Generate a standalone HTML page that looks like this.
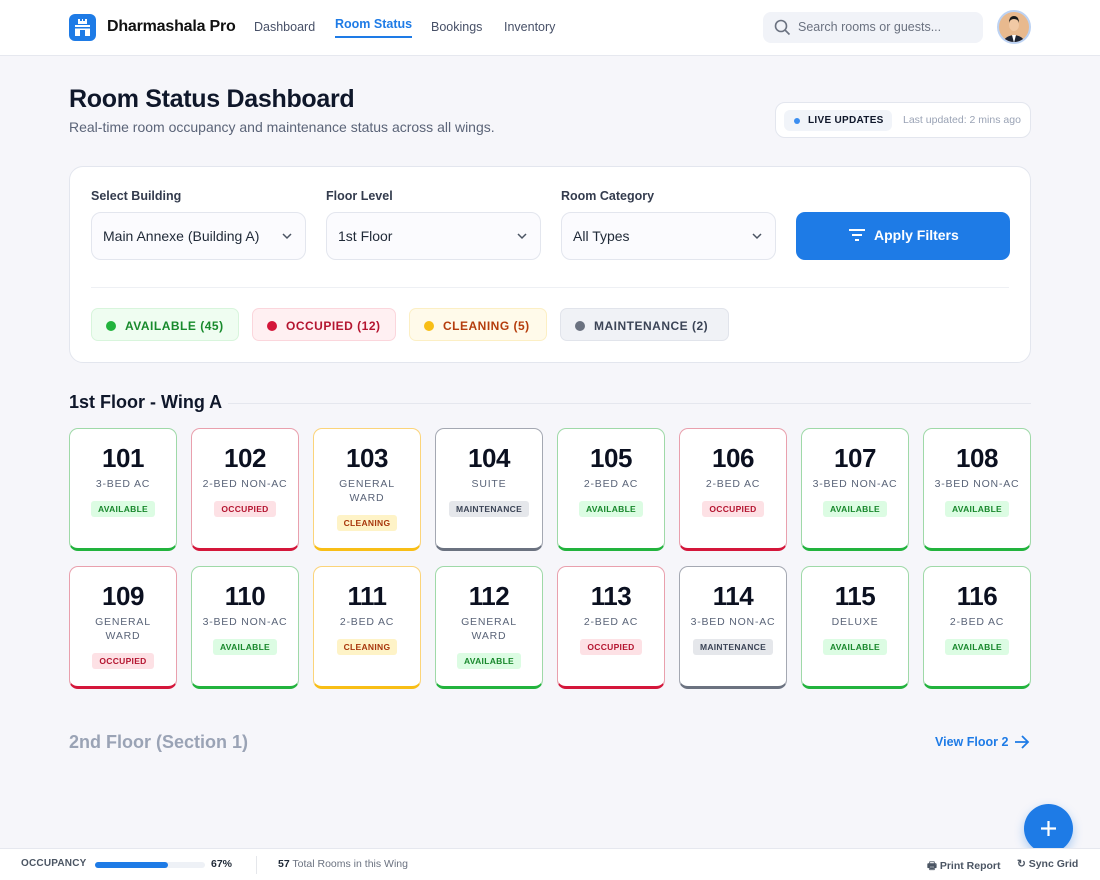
<!DOCTYPE html>
<html><head><meta charset="utf-8"><style>
*{box-sizing:border-box;margin:0;padding:0}
body{width:1100px;height:880px;background:#f6f6fa;font-family:"Liberation Sans",sans-serif;color:#0f172a;position:relative;overflow:hidden}
.hdr{position:absolute;top:0;left:0;width:1100px;height:56px;background:#fff;border-bottom:1px solid #e6e8ef}
.logo{position:absolute;left:69px;top:14px;width:27px;height:27px;background:#1e7be6;border-radius:6px}
.brand{position:absolute;left:107px;top:18px;font-size:16px;font-weight:bold;color:#111;letter-spacing:-0.2px}
.nav{position:absolute;top:20px;font-size:12.5px;color:#475067;white-space:nowrap}
.search{position:absolute;left:763px;top:12px;width:220px;height:31px;background:#f1f3f8;border-radius:8px;font-size:12.5px;color:#6b7280;padding:8px 0 0 35px}
.av{position:absolute;left:997px;top:10px;width:34px;height:34px;border-radius:50%;background:#e8b98e;border:2px solid #bcd2f3;overflow:hidden}
h1{position:absolute;left:69px;top:85px;font-size:25px;font-weight:bold;letter-spacing:-0.3px}
.sub{position:absolute;left:69px;top:119px;font-size:14px;color:#5b6478}
.live{position:absolute;left:775px;top:102px;width:256px;height:36px;background:#fff;border:1px solid #e3e6ee;border-radius:10px;white-space:nowrap}
.live .pill{position:absolute;left:8px;top:7px;width:108px;height:21px;background:#f1f4f9;border-radius:6px;font-size:10px;font-weight:bold;padding:5px 0 0 24px;letter-spacing:.3px}
.live .pill:before{content:"";position:absolute;left:10px;top:8px;width:6px;height:6px;border-radius:50%;background:#3b8ef0}
.live .t{position:absolute;left:127px;top:11px;font-size:10.5px;color:#9aa3b5}
.panel{position:absolute;left:69px;top:166px;width:962px;height:197px;background:#fff;border:1px solid #e3e6ee;border-radius:14px}
.lbl{position:absolute;top:22px;font-size:12.5px;font-weight:bold;color:#333b4d}
.sel{position:absolute;top:45px;width:215px;height:48px;border:1px solid #e3e6ee;background:#fbfbfe;border-radius:10px;font-size:14px;padding:15px 0 0 11px;color:#1f2937}
.sel svg{position:absolute;right:12px;top:19px}
.btn{position:absolute;left:726px;top:45px;width:214px;height:48px;background:#1e7be6;border-radius:9px;color:#fff;font-weight:bold;font-size:14px;padding:15px 0 0 78px}
.btn svg{position:absolute;left:52px;top:16px}
.hr{position:absolute;left:21px;right:21px;top:120px;height:1px;background:#eef0f4}
.chip{position:absolute;top:141px;height:33px;border-radius:7px;font-size:12px;font-weight:bold;letter-spacing:.5px;padding:10px 0 0 33px;white-space:nowrap}
.chip:before{content:"";position:absolute;left:14px;top:12px;width:10px;height:10px;border-radius:50%;background:currentColor}
.chip.a{background:#effdf1;border:1px solid #d8f5dc;color:#178a2c}.chip.a:before{background:#22b33d}
.chip.o{background:#fff0f2;border:1px solid #fbd6dc;color:#b41530}.chip.o:before{background:#d4163a}
.chip.c{background:#fffaea;border:1px solid #fcefc4;color:#b53d0d}.chip.c:before{background:#f8be16}
.chip.m{background:#f0f2f6;border:1px solid #e1e4eb;color:#3b4456}.chip.m:before{background:#6b7280}
.sec{position:absolute;left:69px;top:392px;font-size:18px;font-weight:bold}
.secl{position:absolute;left:228px;right:69px;top:403px;height:1px;background:#e5e7ee}
.card{position:absolute;width:108px;height:123px;background:#fff;border:1px solid;border-bottom-width:3px;border-radius:9px;text-align:center}
.card .n{font-size:26px;font-weight:bold;margin-top:14px;color:#0b1020;letter-spacing:-0.5px}
.card .ty{font-size:10.5px;color:#5a6478;letter-spacing:.8px;margin:3px auto 0;line-height:14px;width:90px}
.card .b{display:inline-block;font-size:8.5px;font-weight:bold;padding:3px 7px;border-radius:3px;margin-top:10px;letter-spacing:.3px}
.g{border-color:#9fd9a8 #9fd9a8 #22b33d}.g .b{background:#dcfce3;color:#17872b}
.r{border-color:#e9a0ad #e9a0ad #d4163a}.r .b{background:#fde1e5;color:#b41530}
.y{border-color:#fbd47a #fbd47a #f8be16}.y .b{background:#fef3c7;color:#a8360c}
.k{border-color:#a4a8b2 #a4a8b2 #6b7280}.k .b{background:#e5e7eb;color:#3b4456}
.f2{position:absolute;left:69px;top:732px;font-size:18px;font-weight:bold;color:#9aa3b5}
.vf{position:absolute;left:935px;top:735px;font-size:12.5px;font-weight:bold;color:#1e7be6;white-space:nowrap}
.fab{position:absolute;left:1024px;top:804px;width:49px;height:49px;border-radius:50%;background:#1e7be6;box-shadow:0 4px 10px rgba(30,123,230,.35)}
.foot{position:absolute;left:0;top:848px;width:1100px;height:32px;background:#fff;border-top:1px solid #e6e8ef;font-size:10.5px;color:#6b7280}
.foot span{position:absolute;top:9px;white-space:nowrap}
</style></head><body>
<div class="hdr">
 <div class="logo"><svg width="27" height="27" viewBox="0 0 27 27"><rect x="9" y="5" width="9" height="5" fill="#fff"/><rect x="11" y="4" width="2" height="3" fill="#1e7be6"/><rect x="14" y="4" width="2" height="3" fill="#1e7be6"/><rect x="6" y="11" width="15" height="11" fill="#fff"/><rect x="11" y="16" width="5" height="6" fill="#1e7be6"/><rect x="6" y="13" width="15" height="1.5" fill="#1e7be6"/></svg></div>
 <div class="brand">Dharmashala Pro</div>
 <div class="nav" style="left:254px">Dashboard</div>
 <div class="nav" style="left:335px;top:17px;color:#1e7be6;font-weight:bold;border-bottom:2px solid #1e7be6;padding-bottom:5px">Room Status</div>
 <div class="nav" style="left:431px">Bookings</div>
 <div class="nav" style="left:504px">Inventory</div>
 <div class="search"><svg style="position:absolute;left:11px;top:7px" width="17" height="17" viewBox="0 0 17 17"><circle cx="7" cy="7" r="5.5" fill="none" stroke="#6b7280" stroke-width="1.6"/><path d="M11 11l4.5 4.5" stroke="#6b7280" stroke-width="1.6"/></svg>Search rooms or guests...</div>
 <div class="av"><svg width="34" height="34" viewBox="0 0 34 34"><ellipse cx="15" cy="13" rx="5" ry="6" fill="#f1c9a5"/><path d="M10 11q0-7 5-7t5 7q-1-4-5-4t-5 4z" fill="#1a1a1a"/><path d="M3 34q1-10 12-11 11 1 12 11z" fill="#1d2433"/><path d="M13 23l2 8 2-8z" fill="#fff"/></svg></div>
</div>
<h1>Room Status Dashboard</h1>
<div class="sub">Real-time room occupancy and maintenance status across all wings.</div>
<div class="live"><div class="pill">LIVE UPDATES</div><div class="t">Last updated: 2 mins ago</div></div>
<div class="panel">
 <div class="lbl" style="left:21px">Select Building</div>
 <div class="lbl" style="left:256px">Floor Level</div>
 <div class="lbl" style="left:491px">Room Category</div>
 <div class="sel" style="left:21px">Main Annexe (Building A)<svg width="12" height="8" viewBox="0 0 12 8"><path d="M2 2l4 4 4-4" fill="none" stroke="#4b5563" stroke-width="1.5"/></svg></div>
 <div class="sel" style="left:256px">1st Floor<svg width="12" height="8" viewBox="0 0 12 8"><path d="M2 2l4 4 4-4" fill="none" stroke="#4b5563" stroke-width="1.5"/></svg></div>
 <div class="sel" style="left:491px">All Types<svg width="12" height="8" viewBox="0 0 12 8"><path d="M2 2l4 4 4-4" fill="none" stroke="#4b5563" stroke-width="1.5"/></svg></div>
 <div class="btn"><svg width="18" height="14" viewBox="0 0 18 14"><path d="M1 2h16M4 7h10M7 12h4" stroke="#fff" stroke-width="2"/></svg>Apply Filters</div>
 <div class="hr"></div>
 <div class="chip a" style="left:21px;width:148px">AVAILABLE (45)</div>
 <div class="chip o" style="left:182px;width:144px">OCCUPIED (12)</div>
 <div class="chip c" style="left:339px;width:138px">CLEANING (5)</div>
 <div class="chip m" style="left:490px;width:169px">MAINTENANCE (2)</div>
</div>
<div class="sec">1st Floor - Wing A</div><div class="secl"></div>

<div class="card g" style="left:69px;top:428px"><div class="n">101</div><div class="ty">3-BED AC</div><div class="b">AVAILABLE</div></div>
<div class="card r" style="left:191px;top:428px"><div class="n">102</div><div class="ty">2-BED NON-AC</div><div class="b">OCCUPIED</div></div>
<div class="card y" style="left:313px;top:428px"><div class="n">103</div><div class="ty">GENERAL WARD</div><div class="b">CLEANING</div></div>
<div class="card k" style="left:435px;top:428px"><div class="n">104</div><div class="ty">SUITE</div><div class="b">MAINTENANCE</div></div>
<div class="card g" style="left:557px;top:428px"><div class="n">105</div><div class="ty">2-BED AC</div><div class="b">AVAILABLE</div></div>
<div class="card r" style="left:679px;top:428px"><div class="n">106</div><div class="ty">2-BED AC</div><div class="b">OCCUPIED</div></div>
<div class="card g" style="left:801px;top:428px"><div class="n">107</div><div class="ty">3-BED NON-AC</div><div class="b">AVAILABLE</div></div>
<div class="card g" style="left:923px;top:428px"><div class="n">108</div><div class="ty">3-BED NON-AC</div><div class="b">AVAILABLE</div></div>

<div class="card r" style="left:69px;top:566px"><div class="n">109</div><div class="ty">GENERAL WARD</div><div class="b">OCCUPIED</div></div>
<div class="card g" style="left:191px;top:566px"><div class="n">110</div><div class="ty">3-BED NON-AC</div><div class="b">AVAILABLE</div></div>
<div class="card y" style="left:313px;top:566px"><div class="n">111</div><div class="ty">2-BED AC</div><div class="b">CLEANING</div></div>
<div class="card g" style="left:435px;top:566px"><div class="n">112</div><div class="ty">GENERAL WARD</div><div class="b">AVAILABLE</div></div>
<div class="card r" style="left:557px;top:566px"><div class="n">113</div><div class="ty">2-BED AC</div><div class="b">OCCUPIED</div></div>
<div class="card k" style="left:679px;top:566px"><div class="n">114</div><div class="ty">3-BED NON-AC</div><div class="b">MAINTENANCE</div></div>
<div class="card g" style="left:801px;top:566px"><div class="n">115</div><div class="ty">DELUXE</div><div class="b">AVAILABLE</div></div>
<div class="card g" style="left:923px;top:566px"><div class="n">116</div><div class="ty">2-BED AC</div><div class="b">AVAILABLE</div></div>

<div class="f2">2nd Floor (Section 1)</div>
<div class="vf">View Floor 2 <svg style="vertical-align:-3px;margin-left:2px" width="16" height="14" viewBox="0 0 16 14"><path d="M1 7h13M8 1l6 6-6 6" fill="none" stroke="#1e7be6" stroke-width="1.8"/></svg></div>
<div class="fab"><svg width="49" height="49" viewBox="0 0 49 49"><path d="M24.5 17v15M17 24.5h15" stroke="#fff" stroke-width="2.2"/></svg></div>
<div class="foot">
 <span style="left:21px;font-weight:bold;letter-spacing:.2px;color:#4b5563;font-size:10px">OCCUPANCY</span>
 <span style="left:95px;top:13px;width:110px;height:6px;background:#eef1f6;border-radius:3px"><i style="display:block;width:73px;height:6px;background:#1e7be6;border-radius:3px"></i></span>
 <span style="left:211px;font-weight:bold;color:#1f2937">67%</span>
 <span style="left:256px;top:7px;width:1px;height:18px;background:#e5e7eb"></span>
 <span style="left:278px"><b style="color:#1f2937">57</b> Total Rooms in this Wing</span>
 <span style="left:927px;font-weight:bold;color:#4b5563">🖶 Print Report</span>
 <span style="left:1017px;font-weight:bold;color:#4b5563">↻ Sync Grid</span>
</div>
</body></html>
